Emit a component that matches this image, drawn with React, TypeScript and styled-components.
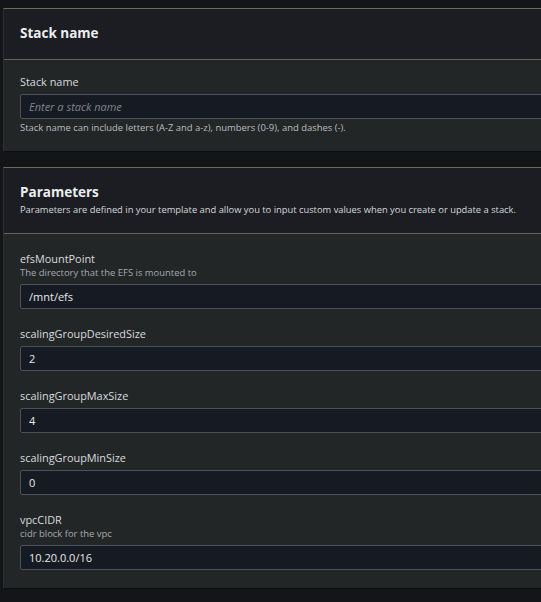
import React from "react";
import styled, { createGlobalStyle } from "styled-components";

const GlobalStyle = createGlobalStyle`
  html, body {
    margin: 0;
    padding: 0;
    background: #131519;
  }
  body {
    font-family: "Open Sans", "Noto Sans", sans-serif;
    overflow: hidden;
  }
  * { box-sizing: border-box; }
`;

const Page = styled.div`
  width: 541px;
  height: 602px;
  overflow: hidden;
  padding: 8px 0 0 3px;
  display: flex;
  flex-direction: column;
  gap: 15px;
  background: #131519;
`;

const Card = styled.section`
  width: 640px;
  flex-shrink: 0;
  border-top: 1px solid #6f695c;
  border-left: 1px solid #2b2e33;
  border-bottom: 1px solid #0d0e10;
  background: #232627;
`;

const CardHeader = styled.header<{ $tall?: boolean }>`
  background: #1b1d22;
  border-bottom: 1px solid #66635c;
  padding: 15px 16px ${(p) => (p.$tall ? "16px" : "17px")};
  display: flex;
  flex-direction: column;
`;

const Title = styled.h2`
  margin: 0;
  font-size: 13.5px;
  line-height: 18px;
  font-weight: 700;
  color: #eceeef;
`;

const HeaderDesc = styled.p`
  margin: 2px 0 0;
  font-size: 9.35px;
  line-height: 14px;
  color: #d6d9dc;
`;

const CardBody = styled.div<{ $top: number; $bottom: number; $gap: number }>`
  padding: ${(p) => p.$top}px 16px ${(p) => p.$bottom}px;
  display: flex;
  flex-direction: column;
  gap: ${(p) => p.$gap}px;
`;

const Field = styled.div`
  display: flex;
  flex-direction: column;
`;

const Label = styled.label`
  font-size: 10.9px;
  line-height: 14px;
  color: #d8dcdf;
`;

const Desc = styled.span`
  font-size: 9.45px;
  line-height: 13px;
  color: #a3a9ae;
`;

const Hint = styled.span`
  margin-top: 2px;
  font-size: 9.45px;
  line-height: 14px;
  color: #b9bdc1;
`;

const Input = styled.input`
  margin-top: 5px;
  width: 100%;
  height: 25px;
  padding: 0 8px;
  background: #161a22;
  border: 1px solid #4d5157;
  border-radius: 2px;
  color: #e8e9ea;
  font-family: "Open Sans", "Noto Sans", sans-serif;
  font-size: 11px;
  outline: none;
  &::placeholder {
    color: #80878e;
    font-style: italic;
  }
`;

type Param = { name: string; desc?: string; value: string };

const params: Param[] = [
  { name: "efsMountPoint", desc: "The directory that the EFS is mounted to", value: "/mnt/efs" },
  { name: "scalingGroupDesiredSize", value: "2" },
  { name: "scalingGroupMaxSize", value: "4" },
  { name: "scalingGroupMinSize", value: "0" },
  { name: "vpcCIDR", desc: "cidr block for the vpc", value: "10.20.0.0/16" },
];

export default function App() {
  return (
    <>
      <GlobalStyle />
      <Page>
        <Card>
          <CardHeader>
            <Title>Stack name</Title>
          </CardHeader>
          <CardBody $top={15} $bottom={16} $gap={0}>
            <Field>
              <Label>Stack name</Label>
              <Input placeholder="Enter a stack name" defaultValue="" />
              <Hint>Stack name can include letters (A-Z and a-z), numbers (0-9), and dashes (-).</Hint>
            </Field>
          </CardBody>
        </Card>
        <Card>
          <CardHeader $tall>
            <Title>Parameters</Title>
            <HeaderDesc>
              Parameters are defined in your template and allow you to input custom values when you create or update a stack.
            </HeaderDesc>
          </CardHeader>
          <CardBody $top={18} $bottom={18} $gap={18}>
            {params.map((p) => (
              <Field key={p.name}>
                <Label>{p.name}</Label>
                {p.desc && <Desc>{p.desc}</Desc>}
                <Input defaultValue={p.value} />
              </Field>
            ))}
          </CardBody>
        </Card>
      </Page>
    </>
  );
}
